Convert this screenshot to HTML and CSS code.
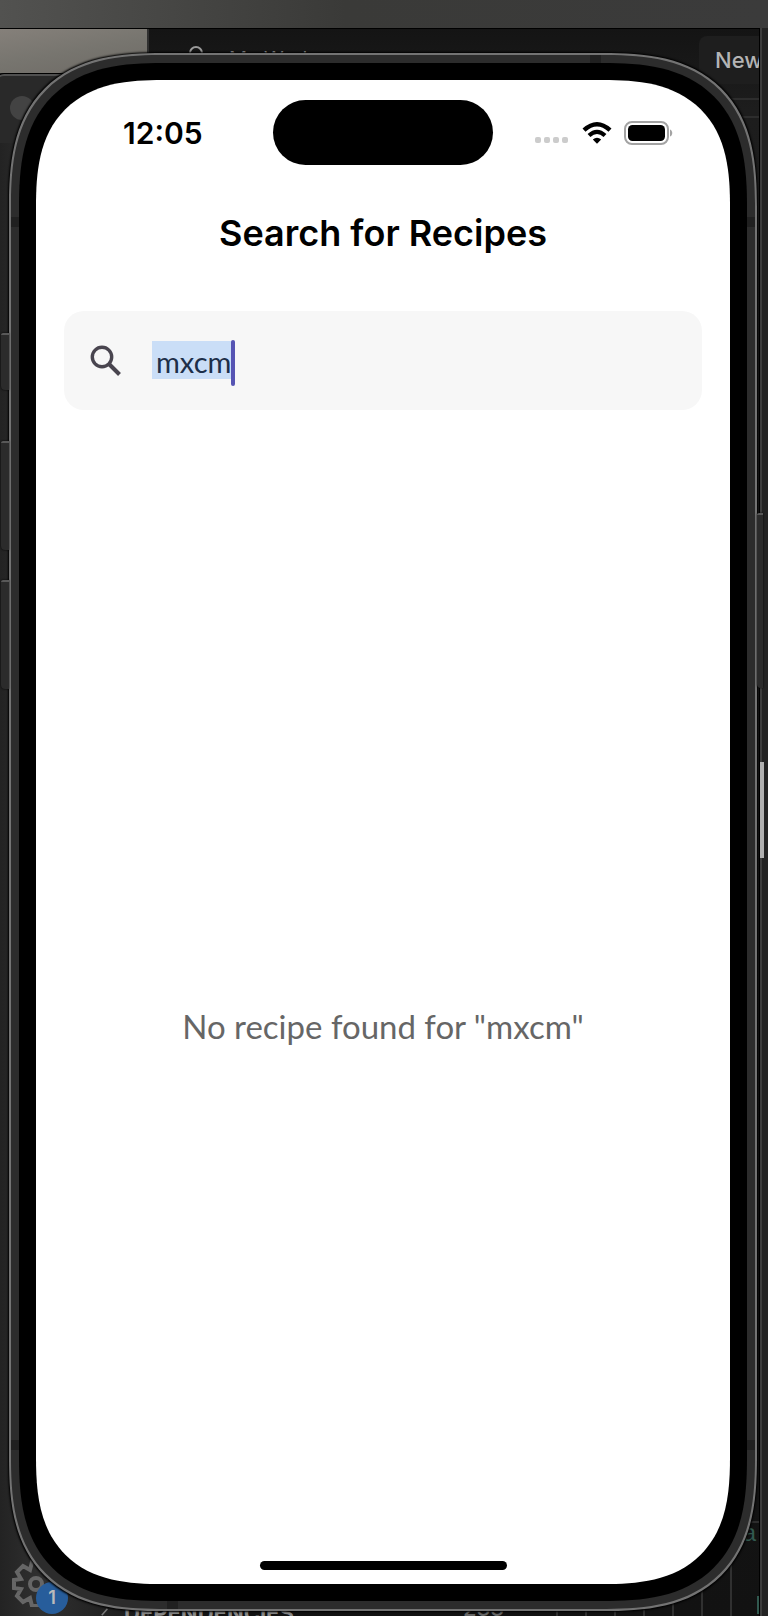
FILE: index.html
```html
<!DOCTYPE html>
<html lang="en">
<head>
<meta charset="utf-8">
<meta name="viewport" content="width=device-width, initial-scale=1">
<title>Search for Recipes</title>
<link rel="stylesheet" href="styles.css">
</head>
<body>
<div class="desktop">
  <div class="backdrop">
    <div class="top-window"></div>
    <div class="photo"></div>
    <div class="side-window"><span class="window-dot"></span></div>
    <div class="editor">
      <svg class="editor-search" viewBox="0 0 20 20"><circle cx="10" cy="8" r="6" fill="none" stroke="#9a9a9a" stroke-width="2"/></svg>
      <span class="workspace">My Workspace</span>
      <button class="new-button" type="button">New</button>
      <span class="rule rule-a"></span>
      <span class="rule rule-b"></span>
      <span class="rule rule-c"></span>
      <span class="code">a</span>
      <span class="code-caret"></span>
      <div class="guides"></div>
    </div>
    <div class="edge-window"></div>
    <span class="scroll-thumb"></span>
    <svg class="gear" viewBox="0 0 48 48" fill="none" stroke="#666" stroke-width="4" stroke-linejoin="miter">
      <path d="M20 3h8l2 8 7-4 5 5-4 7 8 2v8l-8 2 4 7-5 5-7-4-2 8h-8l-2-8-7 4-6-6 4-7-7-1v-8l7-1-4-7 6-6 7 4z"/>
      <circle cx="24" cy="25" r="6"/>
    </svg>
    <span class="badge">1</span>
    <svg class="chevron" viewBox="0 0 10 10"><path d="M1 9l7-8" stroke="#777" stroke-width="2"/></svg>
    <span class="dependencies">DEPENDENCIES</span>
    <span class="line-number">233</span>
  </div>

  <div class="phone">
    <span class="key key-action"></span>
    <span class="key key-up"></span>
    <span class="key key-down"></span>
    <span class="key key-power"></span>
    <span class="band band-side band-high"></span>
    <span class="band band-side band-low"></span>
    <span class="band band-top"></span>
    <span class="band band-bottom"></span>
    <div class="bezel">
      <main class="screen">
        <header class="status">
          <time class="clock">12:05</time>
          <div class="island"></div>
          <div class="indicators">
            <span class="signal"><i></i><i></i><i></i><i></i></span>
            <svg class="wifi" viewBox="0 0 30 22" fill="none" stroke="#000">
              <path d="M2 8.200Q15-3.600 28 8.200" stroke-width="4.400"/>
              <path d="M7 13.500Q15 6.300 23 13.500" stroke-width="4.200"/>
              <path d="M10.800 17.500Q15 13.900 19.200 17.500L15 21.800z" fill="#000" stroke="none"/>
            </svg>
            <svg class="battery" viewBox="0 0 50 24">
              <rect x="1" y="1" width="43" height="22" rx="7" fill="none" stroke="#a3a3a3" stroke-width="2"/>
              <rect x="4" y="4" width="37" height="16" rx="4.500" fill="#000"/>
              <path d="M46 8.500c3 1 3 6 0 7z" fill="#a3a3a3"/>
            </svg>
          </div>
        </header>
        <h1 class="title">Search for Recipes</h1>
        <div class="search">
          <svg class="search-icon" viewBox="0 0 32 32" fill="none" stroke="#49454f">
            <circle cx="12" cy="12" r="9.700" stroke-width="3.400"/>
            <path d="M19 19l10.500 10.500" stroke-width="4"/>
          </svg>
          <div class="field">
            <input class="search-input" type="text" value="mxcm" aria-label="Search for recipes">
            <span class="caret"></span>
          </div>
        </div>
        <p class="message">No recipe found for "mxcm"</p>
        <div class="home"></div>
      </main>
    </div>
  </div>
</div>
</body>
</html>
```
FILE: styles.css
```css
* { box-sizing: border-box; }
body { margin: 0; background: #262626; font-family: Inter, "Liberation Sans", sans-serif; }
.desktop { position: relative; display: flex; min-height: 100vh; padding: 53px 11px 5px 9px; overflow: hidden; }

/* Windows lying behind the phone */
.backdrop { position: absolute; inset: 0; background: linear-gradient(90deg, #232323, #303030 40px, #181818 150px); }
.top-window { position: absolute; top: 0; left: 0; right: 0; height: 29px; background: linear-gradient(90deg, #525250, #3a3a38 45%, #3b3b3b); border-bottom: 1px solid #000; }
.photo { position: absolute; top: 29px; left: 0; width: 147px; height: 44px; background: linear-gradient(170deg, #85807a, #77756f 50%, #6e6a65); }
.side-window { position: absolute; top: 73px; left: -4px; width: 160px; height: 70px; border-top: 1px solid #000; border-radius: 8px 0 0; background: #292929; box-shadow: inset 0 2px #505050; }
.window-dot { position: absolute; left: 14px; top: 22px; width: 24px; height: 24px; border-radius: 50%; background: #434343; }
.editor { position: absolute; top: 29px; bottom: 0; left: 147px; right: 8px; background: linear-gradient(#141414, #1d1d1d 80px, #121212); border-left: 2px solid #303030; border-right: 1px solid #000; overflow: hidden; }
.editor-search { position: absolute; left: 37px; top: 16px; width: 20px; height: 20px; }
.workspace { position: absolute; left: 80px; top: 16px; color: #999; font-size: 20px; line-height: 28px; }
.new-button { position: absolute; right: -24px; top: 7px; width: 84px; height: 48px; padding: 0 0 0 16px; border: 0; border-radius: 8px; background: #1e1e1e; color: #b4b4b4; font: 500 22px/48px Inter, sans-serif; text-align: left; }
.rule { position: absolute; right: 0; width: 40px; height: 2px; background: #2d2d2d; }
.rule-a { top: 69px; }
.rule-b { top: 87px; }
.rule-c { bottom: 93px; }
.code { position: absolute; right: 2px; bottom: 66px; color: #31594f; font: 24px/30px "Liberation Mono", monospace; }
.code-caret { position: absolute; right: 0; bottom: 2px; width: 2px; height: 18px; background: #31594f; }
.guides { position: absolute; right: 0; bottom: 0; width: 203px; height: 88px; background: repeating-linear-gradient(90deg, #303030 0 2px, transparent 2px 29px); }
.edge-window { position: absolute; top: 28px; bottom: 0; right: 0; width: 8px; background: #232323; border-left: 2px solid #3d3d3d; }
.scroll-thumb { position: absolute; right: 4px; top: 762px; width: 4px; height: 96px; background: #b0b0b0; }
.gear { position: absolute; left: 12px; bottom: 9px; width: 48px; height: 48px; }
.badge { position: absolute; left: 36px; bottom: 2px; width: 32px; height: 32px; border-radius: 50%; background: #275d9b; color: #bbb; font-weight: 600; font-size: 18px; line-height: 32px; text-align: center; }
.chevron { position: absolute; left: 100px; bottom: 0; width: 10px; height: 8px; }
.dependencies { position: absolute; left: 124px; bottom: -9px; color: #888; font-weight: 700; font-size: 22px; line-height: 24px; }
.line-number { position: absolute; left: 463px; bottom: -4px; color: #666; font-weight: 500; font-size: 22px; line-height: 24px; }

/* Phone shell */
.phone { position: relative; flex: 1; display: flex; padding: 8px; border: 2px solid #737373; border-radius: 122px; background: #2c2c2c; box-shadow: 0 0 2px 1px #000; }
.bezel { position: relative; flex: 1; display: flex; padding: 17px; border-radius: 114px; background: #000; }
.screen { flex: 1; display: flex; flex-direction: column; border-radius: 98px; background: #fff; overflow: hidden; padding: 20px 28px 14px; }
@supports (corner-shape: superellipse(1.4)) {
  .phone { border-radius: 154px; corner-shape: superellipse(1.4); }
  .bezel { border-radius: 144px; corner-shape: superellipse(1.4); }
  .screen { border-radius: 127px; corner-shape: superellipse(1.4); }
}
.key { position: absolute; left: -10px; width: 8px; border-top: 2px solid #585858; border-radius: 2px 0 0 4px; background: #2b2b2b; box-shadow: 0 0 2px #000; }
.key-action { top: 278px; height: 57px; }
.key-up { top: 386px; height: 109px; }
.key-down { top: 525px; height: 109px; }
.key-power { left: auto; right: -8px; top: 458px; width: 6px; height: 175px; }
.band { position: absolute; background: #202020; }
.band-side { left: 0; right: 0; height: 10px; }
.band-high { top: 162px; }
.band-low { bottom: 159px; }
.band-top { top: 0; right: 154px; width: 11px; height: 9px; }
.band-bottom { bottom: 0; left: 156px; width: 11px; height: 9px; }

/* Status bar */
.status { display: grid; grid-template-columns: 1fr 220px 1fr; align-items: center; }
.clock { justify-self: start; margin-left: 59px; font-weight: 600; font-size: 30px; line-height: 36px; }
.island { height: 65px; border-radius: 33px; background: #000; }
.indicators { display: flex; align-items: center; justify-self: end; gap: 12px; margin-right: 28px; }
.signal { display: flex; gap: 3px; padding: 14px 2px 0 0; }
.signal i { width: 6px; height: 6px; border-radius: 2px; background: #ccc; }
.wifi { width: 30px; height: 22px; }
.battery { width: 50px; height: 24px; }

/* Search page */
.title { margin: 46px 0 0; font-weight: 600; font-size: 36px; line-height: 44px; text-align: center; }
.search { display: flex; align-items: center; gap: 30px; height: 99px; margin-top: 56px; padding: 0 26px; border-radius: 20px; background: #f7f7f7; }
.search-icon { flex: none; width: 32px; height: 32px; }
.field { position: relative; flex: 1; padding-bottom: 2px; }
.search-input { display: block; width: 100%; height: 38px; padding: 3px 0 0 4px; border: 0; outline: 0; background: linear-gradient(#cadef7, #cadef7) 0 0 / 83px 38px no-repeat; color: #1d2f49; font: 29px/34px Lato, sans-serif; }
.caret { position: absolute; left: 79px; top: -1px; width: 4px; height: 46px; border-radius: 2px; background: #5654b3; }
.message { flex: 1; display: flex; align-items: center; justify-content: center; margin: 0; padding-top: 80px; color: #666; font: 33px/40px Lato, sans-serif; text-align: center; }
.home { align-self: center; width: 247px; height: 9px; border-radius: 5px; background: #000; }
```
